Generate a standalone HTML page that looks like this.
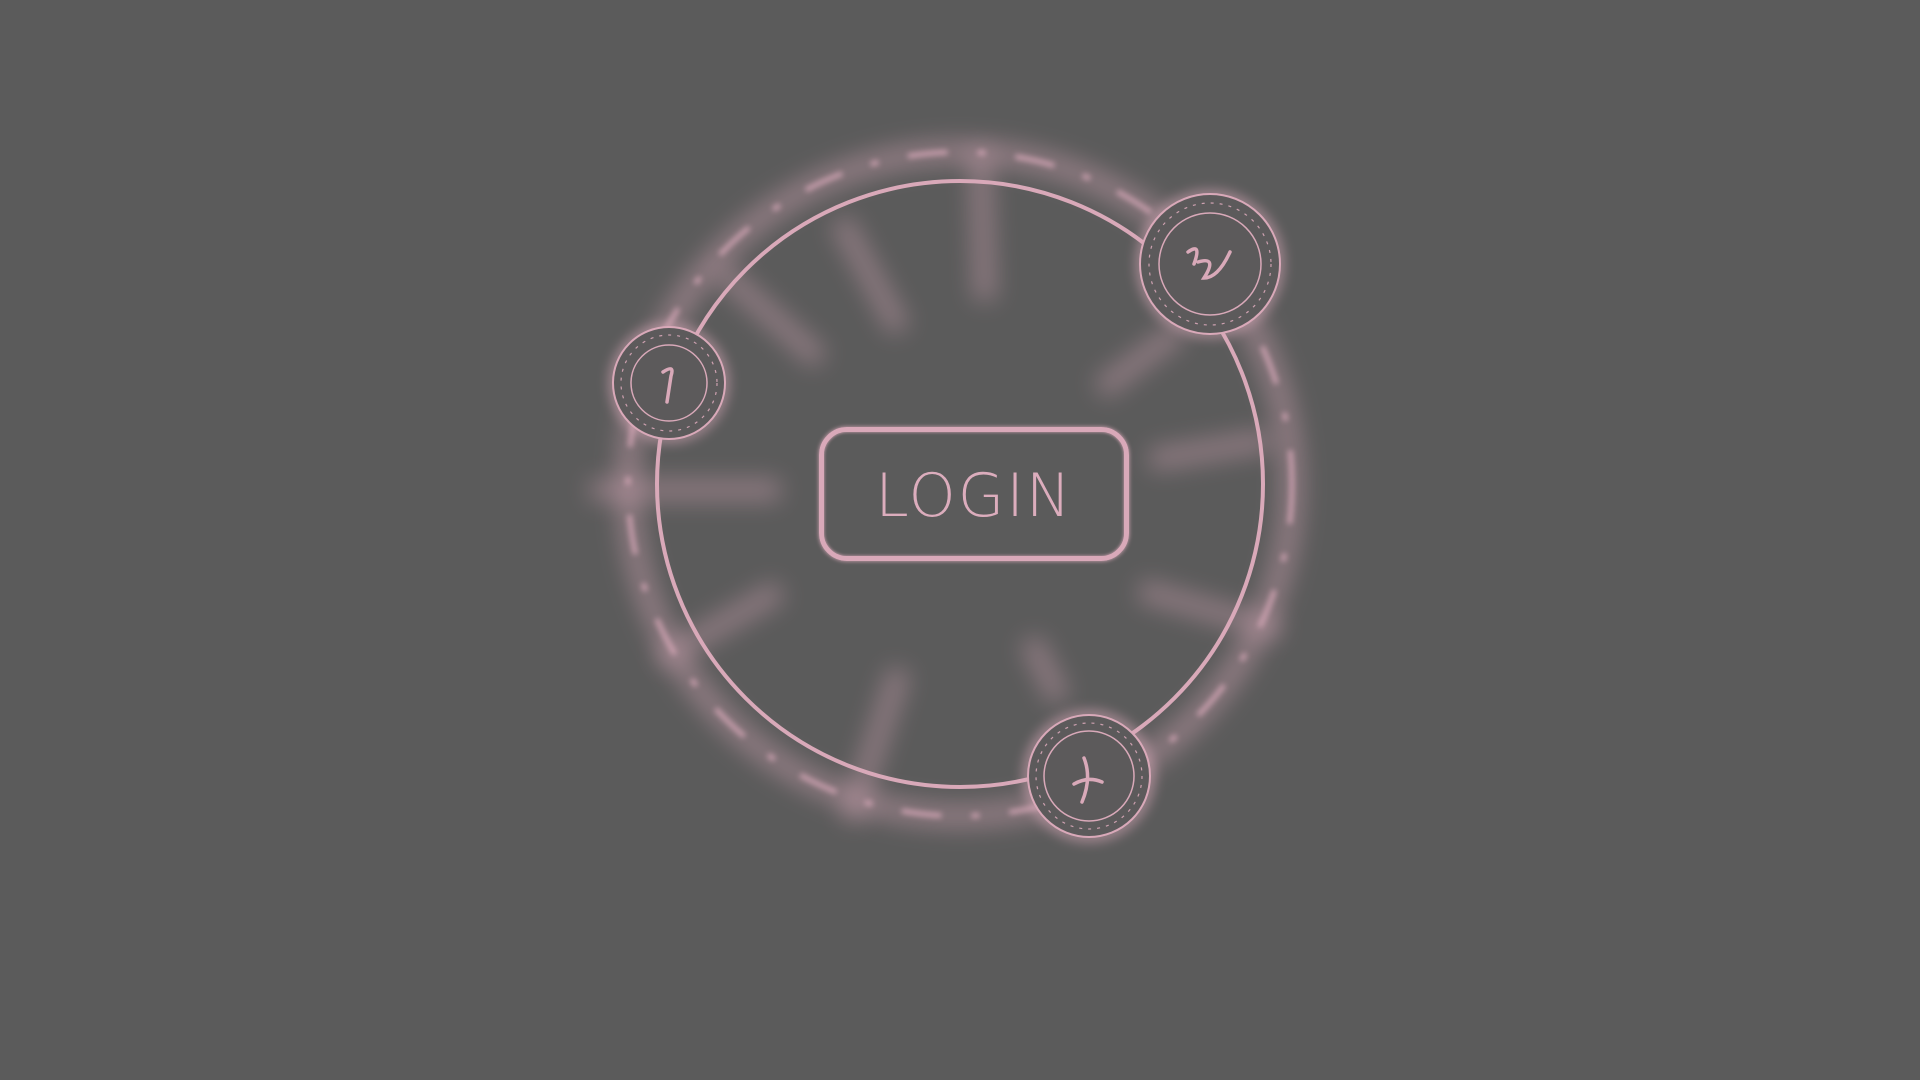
<!DOCTYPE html>
<html><head><style>
html,body{margin:0;padding:0;background:#5b5b5b;width:1920px;height:1080px;overflow:hidden}
svg{position:absolute;left:0;top:0}
.btn{position:absolute;left:819px;top:427px;width:310px;height:134px;border:5px solid #d9a9b9;border-radius:28px;box-shadow:0 0 4px #d9a9b9,inset 0 0 3px #d9a9b9;box-sizing:border-box;color:#dcadbd;font-family:"DejaVu Sans","Liberation Sans",sans-serif;font-weight:200;font-size:60px;letter-spacing:2px;text-align:center;line-height:128px;-webkit-text-stroke:0px}
</style></head><body>
<svg width="1920" height="1080" viewBox="0 0 1920 1080">
<defs>
<filter id="b12" x="-50%" y="-50%" width="200%" height="200%"><feGaussianBlur stdDeviation="12"/></filter>
<filter id="b6" x="-50%" y="-50%" width="200%" height="200%"><feGaussianBlur stdDeviation="6"/></filter>
<filter id="b3" x="-50%" y="-50%" width="200%" height="200%"><feGaussianBlur stdDeviation="3"/></filter>
</defs>
<g stroke="#d9a9b9" fill="none">
<g filter="url(#b12)" opacity="0.4" stroke-width="22">
<line x1="980" y1="150" x2="985" y2="300"/><line x1="840" y1="220" x2="900" y2="330"/>
<line x1="1180" y1="330" x2="1100" y2="390"/><line x1="590" y1="490" x2="780" y2="490"/>
<line x1="660" y1="660" x2="780" y2="590"/><line x1="850" y1="820" x2="900" y2="670"/>
<line x1="1280" y1="630" x2="1140" y2="590"/><line x1="1270" y1="440" x2="1150" y2="460"/>
<line x1="720" y1="270" x2="820" y2="360"/><line x1="1060" y1="700" x2="1030" y2="640"/>
</g>
<circle cx="960" cy="484" r="332" stroke-width="22" filter="url(#b12)" opacity="0.45"/>
<circle cx="960" cy="484" r="332" stroke-width="5" stroke-dasharray="40 30 8 30" filter="url(#b3)" opacity="0.8"/>
<circle cx="960" cy="484" r="303" stroke-width="4"/>
<g filter="url(#b6)" opacity="0.6" stroke-width="12">
<circle cx="1210" cy="264" r="68"/>
<circle cx="669" cy="383" r="54"/>
<circle cx="1089" cy="776" r="60"/>
</g>
<g fill="#5c5a5b">
<circle cx="1210" cy="264" r="70" stroke-width="2"/>
<circle cx="669" cy="383" r="56" stroke-width="2"/>
<circle cx="1089" cy="776" r="61" stroke-width="2"/>
</g>
<circle cx="1210" cy="264" r="51" stroke-width="1.5"/>
<circle cx="669" cy="383" r="38" stroke-width="1.5"/>
<circle cx="1089" cy="776" r="45" stroke-width="1.5"/>
<g stroke-width="1.2" stroke-dasharray="3 6" opacity="0.9">
<circle cx="1210" cy="264" r="61"/><circle cx="669" cy="383" r="48"/><circle cx="1089" cy="776" r="53"/>
</g>
<g stroke-width="3.5" stroke-linecap="round">
<path d="M1188 252 q14 -10 6 12 M1198 262 q20 -6 6 16 q14 0 26 -26"/>
<path d="M663 372 q12 -8 8 4 l-4 26"/>
<path d="M1084 758 q8 20 -2 44 M1074 784 q14 -8 28 -2"/>
</g>
</g>
</svg>
<div class="btn">LOGIN</div>
</body></html>
